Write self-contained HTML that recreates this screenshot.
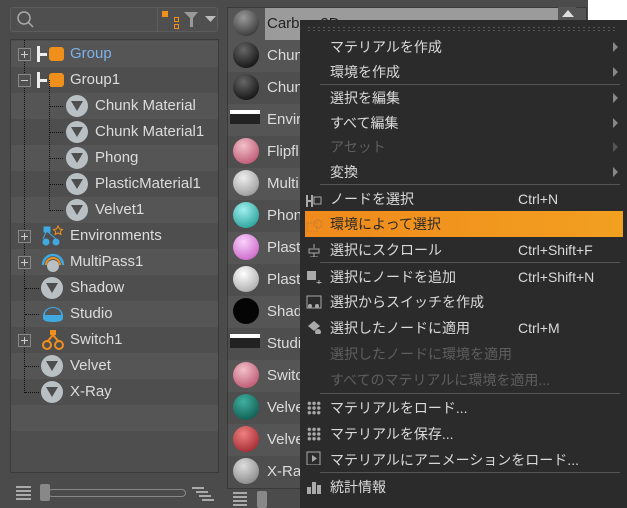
<!DOCTYPE html>
<html><head><meta charset="utf-8"><style>
*{margin:0;padding:0;box-sizing:border-box}
body{width:627px;height:508px;background:#4b4b4b;position:relative;overflow:hidden;font-family:"Liberation Sans","Noto Sans CJK JP",sans-serif;font-size:14px;color:#dcdcdc}
.a{position:absolute}
.search{left:10px;top:7px;width:208px;height:25px;border:1px solid #5c5c5c;border-radius:3px;background:#4f4f4f}
.tree{left:10px;top:39px;width:209px;height:434px;border:1px solid #3a3a3a;background:#4e4e4e}
.row{position:absolute;left:0;width:207px;height:26px}
.row span{position:absolute;top:4px;white-space:nowrap;font-size:15px;line-height:18px}
.vi{position:absolute;width:22px;height:22px;border-radius:50%;background:#b8c0c4;top:2px}
.vi:after{content:"";position:absolute;left:5px;top:6px;width:0;height:0;border-left:6px solid transparent;border-right:6px solid transparent;border-top:10px solid #4e4e4e}
.pl{position:absolute;left:7px;top:7px;width:13px;height:13px;border:1px solid #888;background:#505050;z-index:3}
.pl:before{content:"";position:absolute;left:2px;top:5px;width:7px;height:1px;background:#ccc}
.pl.p:after{content:"";position:absolute;left:5px;top:2px;width:1px;height:7px;background:#ccc}
.list{left:227px;top:7px;width:360px;height:482px;border:1px solid #3a3a3a;background:#4e4e4e}
.li{position:absolute;left:0;width:358px;height:32px}
.li span{position:absolute;left:39px;top:7px;font-size:15px}
.ball{position:absolute;left:5px;top:2px;width:26px;height:26px;border-radius:50%}
.menu{left:300px;top:20px;width:327px;height:488px;background:#2b2b2b}
.mi{position:absolute;left:30px;font-size:14px;color:#dadada;white-space:nowrap;line-height:20px}
.sc{position:absolute;left:218px;font-size:14px;color:#dadada;line-height:20px}
.ar{position:absolute;left:313px;width:0;height:0;border-top:5px solid transparent;border-bottom:5px solid transparent;border-left:5px solid #888}
.sep{position:absolute;left:20px;width:300px;height:1px;background:#555}
.dis{color:#5e5e5e}
.ic{position:absolute;left:6px;width:16px;height:14px}
.dl{position:absolute;height:1px;border-top:1px dotted #111;top:13px}
</style></head><body>
<div class="a search">
<svg class="a" style="left:5px;top:2px" width="20" height="20"><circle cx="8" cy="8" r="6" fill="none" stroke="#aaa" stroke-width="1.5"/><line x1="12" y1="12" x2="17" y2="17" stroke="#aaa" stroke-width="1.5"/></svg>
<div class="a" style="left:146px;top:0;width:1px;height:23px;background:#5c5c5c"></div>
<div class="a" style="left:151px;top:3px;width:6px;height:6px;background:#f0901c"></div>
<div class="a" style="left:163px;top:9px;width:5px;height:5px;border:1px solid #f0901c"></div>
<div class="a" style="left:163px;top:16px;width:5px;height:5px;border:1px solid #f0901c"></div>
<svg class="a" style="left:172px;top:3px" width="40" height="18"><path d="M1 1h14l-5 6v9h-3v-9z" fill="#999"/><path d="M22 5h11l-5.5 6z" fill="#bbb"/></svg>
</div>
<div class="a tree">
<div class="row" style="top:1px;background:#555"><div class="pl p"></div><div class="a" style="left:26px;top:5px;width:3px;height:16px;background:#eee"></div><div class="a" style="left:26px;top:12px;width:10px;height:3px;background:#eee"></div><div class="a" style="left:38px;top:6px;width:15px;height:14px;border-radius:3px;background:#f0901c"></div><span style="left:59px;color:#7eb2ea">Group</span></div>
<div class="row" style="top:27px;background:#4e4e4e"><div class="pl"></div><div class="a" style="left:26px;top:5px;width:3px;height:16px;background:#eee"></div><div class="a" style="left:26px;top:12px;width:10px;height:3px;background:#eee"></div><div class="a" style="left:38px;top:6px;width:15px;height:14px;border-radius:3px;background:#f0901c"></div><span style="left:59px">Group1</span></div>
<div class="row" style="top:53px;background:#555"><div class="dl" style="left:38px;width:14px"></div><div class="vi" style="left:55px"></div><span style="left:84px">Chunk Material</span></div>
<div class="row" style="top:79px;background:#4e4e4e"><div class="dl" style="left:38px;width:14px"></div><div class="vi" style="left:55px"></div><span style="left:84px">Chunk Material1</span></div>
<div class="row" style="top:105px;background:#555"><div class="dl" style="left:38px;width:14px"></div><div class="vi" style="left:55px"></div><span style="left:84px">Phong</span></div>
<div class="row" style="top:131px;background:#4e4e4e"><div class="dl" style="left:38px;width:14px"></div><div class="vi" style="left:55px"></div><span style="left:84px">PlasticMaterial1</span></div>
<div class="row" style="top:157px;background:#555"><div class="dl" style="left:38px;width:14px"></div><div class="vi" style="left:55px"></div><span style="left:84px">Velvet1</span></div>
<div class="row" style="top:183px;background:#4e4e4e"><div class="pl p"></div><svg class="a" style="left:30px;top:2px" width="24" height="22"><path d="M3 2h6v5H3zM5 7L2 14M7 7l8 7" stroke="#3fa9e0" fill="#3fa9e0"/><circle cx="5" cy="17" r="3.5" fill="#3fa9e0"/><circle cx="15" cy="17" r="3.5" fill="#3fa9e0"/><path d="M17 1l1.5 3 3 .5-2.2 2 .6 3-2.9-1.5-2.9 1.5.6-3-2.2-2 3-.5z" fill="none" stroke="#f0901c"/></svg><span style="left:59px">Environments</span></div>
<div class="row" style="top:209px;background:#555"><div class="pl p"></div><svg class="a" style="left:30px;top:2px" width="24" height="22"><path d="M2 14a10 10 0 0 1 20 0" fill="none" stroke="#3fa9e0" stroke-width="2.5"/><path d="M5 14a7 7 0 0 1 14 0" fill="none" stroke="#f0901c" stroke-width="2"/><circle cx="12" cy="15" r="6" fill="#b8c0c4"/></svg><span style="left:59px">MultiPass1</span></div>
<div class="row" style="top:235px;background:#4e4e4e"><div class="dl" style="left:14px;width:14px"></div><div class="vi" style="left:30px"></div><span style="left:59px">Shadow</span></div>
<div class="row" style="top:261px;background:#555"><div class="dl" style="left:14px;width:14px"></div><svg class="a" style="left:30px;top:3px" width="24" height="20"><path d="M2 12a10 9 0 0 1 20 0v2c0 3-4 4-10 4s-10-1-10-4z" fill="#3fa9e0"/><path d="M4 11a8 7 0 0 1 16 0z" fill="#555"/></svg><span style="left:59px">Studio</span></div>
<div class="row" style="top:287px;background:#4e4e4e"><div class="pl p"></div><svg class="a" style="left:30px;top:2px" width="24" height="22"><rect x="9" y="1" width="6" height="5" fill="#f0901c"/><path d="M12 6L6 13M12 6l6 7" stroke="#f0901c" stroke-width="2"/><circle cx="6" cy="16" r="4" fill="none" stroke="#f0901c" stroke-width="2"/><circle cx="18" cy="16" r="4" fill="none" stroke="#f0901c" stroke-width="2"/></svg><span style="left:59px">Switch1</span></div>
<div class="row" style="top:313px;background:#555"><div class="dl" style="left:14px;width:14px"></div><div class="vi" style="left:30px"></div><span style="left:59px">Velvet</span></div>
<div class="row" style="top:339px;background:#4e4e4e"><div class="dl" style="left:14px;width:14px"></div><div class="vi" style="left:30px"></div><span style="left:59px">X-Ray</span></div>
<div class="row" style="top:365px;height:26px;background:#555"></div>
<div class="a" style="left:13px;top:0;width:1px;height:353px;border-left:1px dotted #111"></div>
<div class="a" style="left:38px;top:40px;width:1px;height:131px;border-left:1px dotted #111"></div>
</div>
<div class="a" style="left:16px;top:486px;width:15px;height:14px;background:repeating-linear-gradient(#aaa 0 2px,transparent 2px 4px)"></div>
<div class="a" style="left:48px;top:489px;width:138px;height:8px;border:1px solid #888;border-radius:4px"></div>
<div class="a" style="left:40px;top:484px;width:10px;height:17px;background:#888;border-radius:2px"></div>
<div class="a" style="left:192px;top:487px;width:22px;height:14px;background:linear-gradient(#aaa,#aaa) 0 0/12px 2px no-repeat,linear-gradient(#aaa,#aaa) 4px 4px/12px 2px no-repeat,linear-gradient(#aaa,#aaa) 7px 8px/12px 2px no-repeat,linear-gradient(#aaa,#aaa) 10px 12px/12px 2px no-repeat"></div>
<div class="a" style="left:233px;top:492px;width:14px;height:14px;background:repeating-linear-gradient(#aaa 0 2px,transparent 2px 4px)"></div>
<div class="a" style="left:257px;top:491px;width:10px;height:17px;background:#888;border-radius:2px"></div>
<div class="a list">
<div class="li" style="top:0;background:#555"><div class="a" style="left:37px;top:0;width:293px;height:32px;background:#9b9b9b"></div><div class="ball" style="background:radial-gradient(circle at 40% 30%,#999,#222)"></div><span style="color:#222">Carbon 2D</span></div>
<div class="li" style="top:32px;background:#555"><div class="ball" style="background:radial-gradient(circle at 40% 30%,#666,#000)"></div><span>Chunk</span></div>
<div class="li" style="top:64px;background:#4e4e4e"><div class="ball" style="background:radial-gradient(circle at 40% 30%,#666,#000)"></div><span>Chunk</span></div>
<div class="li" style="top:96px;background:#555"><div class="a" style="left:2px;top:6px;width:30px;height:14px;background:linear-gradient(#fff 0 4px,#222 4px)"></div><span>Envir</span></div>
<div class="li" style="top:128px;background:#4e4e4e"><div class="ball" style="background:radial-gradient(circle at 40% 30%,#f3c0c8,#b04060)"></div><span>Flipfl</span></div>
<div class="li" style="top:160px;background:#555"><div class="ball" style="background:radial-gradient(circle at 40% 30%,#eee,#888)"></div><span>Multi</span></div>
<div class="li" style="top:192px;background:#4e4e4e"><div class="ball" style="background:radial-gradient(circle at 40% 30%,#a0f0ee,#109088)"></div><span>Phon</span></div>
<div class="li" style="top:224px;background:#555"><div class="ball" style="background:radial-gradient(circle at 40% 30%,#fbd0fb,#c050c0)"></div><span>Plast</span></div>
<div class="li" style="top:256px;background:#4e4e4e"><div class="ball" style="background:radial-gradient(circle at 40% 30%,#fff,#999)"></div><span>Plast</span></div>
<div class="li" style="top:288px;background:#555"><div class="ball" style="background:#050505"></div><span>Shad</span></div>
<div class="li" style="top:320px;background:#4e4e4e"><div class="a" style="left:2px;top:6px;width:30px;height:14px;background:linear-gradient(#fff 0 4px,#222 4px)"></div><span>Studi</span></div>
<div class="li" style="top:352px;background:#555"><div class="ball" style="background:radial-gradient(circle at 40% 30%,#f3c0c8,#b04060)"></div><span>Switc</span></div>
<div class="li" style="top:384px;background:#4e4e4e"><div class="ball" style="background:radial-gradient(circle at 40% 30%,#40b0a0,#054a40)"></div><span>Velve</span></div>
<div class="li" style="top:416px;background:#555"><div class="ball" style="background:radial-gradient(circle at 40% 30%,#f08080,#901820)"></div><span>Velve</span></div>
<div class="li" style="top:448px;background:#4e4e4e"><div class="ball" style="background:radial-gradient(circle at 40% 30%,#ddd,#777)"></div><span>X-Ra</span></div>
</div>
<div class="a" style="left:558px;top:7px;width:18px;height:15px;background:#555"></div>
<div class="a" style="left:562px;top:10px;width:0;height:0;border-left:6px solid transparent;border-right:6px solid transparent;border-bottom:7px solid #ddd"></div>
<div class="a" style="left:588px;top:0;width:39px;height:20px;background:#fff"></div>
<div class="a menu">
<div class="a" style="left:8px;top:7px;width:310px;height:4px;background:repeating-linear-gradient(90deg,#555 0 2px,transparent 2px 5px) 0 0/100% 1px no-repeat,repeating-linear-gradient(90deg,#555 0 2px,transparent 2px 5px) 0 3px/100% 1px no-repeat"></div>
<div class="mi" style="top:17px">マテリアルを作成</div><div class="ar" style="top:22px"></div>
<div class="mi" style="top:42px">環境を作成</div><div class="ar" style="top:47px"></div>
<div class="sep" style="top:64px"></div>
<div class="mi" style="top:68px">選択を編集</div><div class="ar" style="top:73px"></div>
<div class="mi" style="top:93px">すべて編集</div><div class="ar" style="top:98px"></div>
<div class="mi dis" style="top:117px">アセット</div><div class="ar" style="top:122px;border-left-color:#555"></div>
<div class="mi" style="top:142px">変換</div><div class="ar" style="top:147px"></div>
<div class="sep" style="top:164px"></div>
<svg class="ic" style="top:173px" width="18" height="16"><path d="M1 2v12M1 8h5M6 2v12" stroke="#aaa" stroke-width="2"/><rect x="8" y="4" width="7" height="7" fill="none" stroke="#aaa"/></svg>
<div class="mi" style="top:169px">ノードを選択</div><div class="sc" style="top:169px">Ctrl+N</div>
<div class="a" style="left:5px;top:191px;width:318px;height:26px;background:linear-gradient(90deg,#f08a1c,#f2a020)"></div>
<div class="mi" style="top:194px;color:#2a2a2a">環境によって選択</div>
<svg class="ic" style="top:198px" width="18" height="16"><rect x="1" y="5" width="10" height="9" fill="none" stroke="#c98030" stroke-dasharray="2 1"/><circle cx="12" cy="6" r="4" fill="none" stroke="#c98030"/></svg>
<svg class="ic" style="top:223px" width="18" height="16"><path d="M8 1v4M3 6h10v4H3zM8 10v4M4 14h8" stroke="#aaa" fill="none"/></svg>
<div class="mi" style="top:220px">選択にスクロール</div><div class="sc" style="top:220px">Ctrl+Shift+F</div>
<div class="sep" style="top:242px"></div>
<svg class="ic" style="top:250px" width="18" height="16"><rect x="1" y="1" width="9" height="9" fill="#aaa"/><path d="M13 10v5M10.5 12.5h5" stroke="#aaa"/></svg>
<div class="mi" style="top:247px">選択にノードを追加</div><div class="sc" style="top:247px">Ctrl+Shift+N</div>
<svg class="ic" style="top:275px" width="18" height="16"><rect x="1" y="1" width="14" height="12" fill="none" stroke="#aaa"/><circle cx="4" cy="11" r="2" fill="#aaa"/><circle cx="11" cy="11" r="2" fill="#aaa"/></svg>
<div class="mi" style="top:272px">選択からスイッチを作成</div>
<svg class="ic" style="top:300px" width="18" height="16"><path d="M2 6l6-5 6 5-6 5z" fill="#aaa"/><circle cx="12" cy="12" r="3" fill="#aaa"/></svg>
<div class="mi" style="top:298px">選択したノードに適用</div><div class="sc" style="top:298px">Ctrl+M</div>
<div class="mi dis" style="top:324px">選択したノードに環境を適用</div>
<div class="mi dis" style="top:350px">すべてのマテリアルに環境を適用...</div>
<div class="sep" style="top:373px"></div>
<div class="a" style="left:7px;top:381px;width:14px;height:14px;background:radial-gradient(circle,#aaa 1.5px,transparent 2px) 0 0/4.7px 4.7px"></div>
<div class="mi" style="top:378px">マテリアルをロード...</div>
<div class="a" style="left:7px;top:407px;width:14px;height:14px;background:radial-gradient(circle,#aaa 1.5px,transparent 2px) 0 0/4.7px 4.7px"></div>
<div class="mi" style="top:404px">マテリアルを保存...</div>
<svg class="ic" style="top:431px" width="18" height="16"><rect x="1" y="1" width="13" height="13" fill="none" stroke="#aaa"/><path d="M6 4l5 3.5-5 3.5z" fill="#aaa"/></svg>
<div class="mi" style="top:430px">マテリアルにアニメーションをロード...</div>
<div class="sep" style="top:452px"></div>
<svg class="ic" style="top:460px" width="18" height="16"><rect x="1" y="7" width="4" height="8" fill="#aaa"/><rect x="6" y="2" width="4" height="13" fill="#aaa"/><rect x="11" y="5" width="4" height="10" fill="#aaa"/></svg>
<div class="mi" style="top:457px">統計情報</div>
</div>
</body></html>
